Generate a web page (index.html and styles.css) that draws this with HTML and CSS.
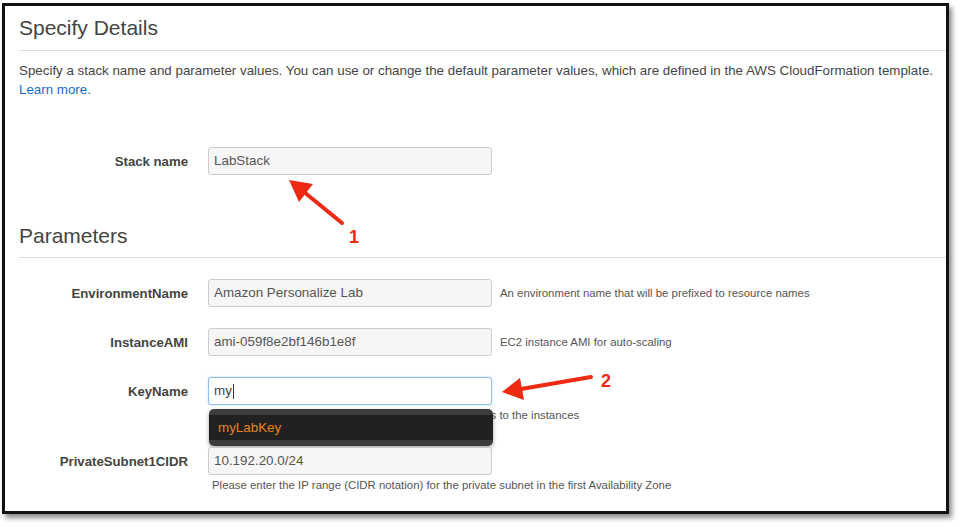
FILE: index.html
```html
<!DOCTYPE html>
<html>
<head>
<meta charset="utf-8">
<link rel="stylesheet" href="styles.css">
</head>
<body>
<div class="frame">
  <h2 class="title">Specify Details</h2>
  <hr class="rule">
  <p class="intro">Specify a stack name and parameter values. You can use or change the default parameter values, which are defined in the AWS CloudFormation template. <a class="link" href="#">Learn more.</a></p>

  <div class="row stack-row">
    <label class="label">Stack name</label>
    <div class="input">LabStack</div>
  </div>

  <h2 class="title params">Parameters</h2>
  <hr class="rule params-rule">

  <div class="row">
    <label class="label">EnvironmentName</label>
    <div class="input">Amazon Personalize Lab</div>
    <span class="help">An environment name that will be prefixed to resource names</span>
  </div>
  <div class="row">
    <label class="label">InstanceAMI</label>
    <div class="input">ami-059f8e2bf146b1e8f</div>
    <span class="help">EC2 instance AMI for auto-scaling</span>
  </div>
  <div class="row key-row">
    <label class="label">KeyName</label>
    <div class="input focus">my<span class="caret"></span></div>
    <span class="help below">Name of an existing EC2 KeyPair to enable SSH access to the instances</span>
    <div class="menu"><div class="menu-item">myLabKey</div></div>
  </div>
  <div class="row after-key">
    <label class="label">PrivateSubnet1CIDR</label>
    <div class="input">10.192.20.0/24</div>
    <span class="help below">Please enter the IP range (CIDR notation) for the private subnet in the first Availability Zone</span>
  </div>
</div>

<svg class="arrows" width="960" height="527" viewBox="0 0 960 527">
  <line x1="342" y1="223" x2="304" y2="192" stroke="#ee2a12" stroke-width="4" stroke-linecap="round"/>
  <polygon points="289,180 313,184 299,202" fill="#ee2a12"/>
  <line x1="591" y1="377" x2="521" y2="389" stroke="#ee2a12" stroke-width="4" stroke-linecap="round"/>
  <polygon points="502,392 520,378 524,400" fill="#ee2a12"/>
  <text x="354" y="243" class="num">1</text>
  <text x="606" y="387" class="num">2</text>
</svg>
</body>
</html>
```

FILE: styles.css
```css
html, body {
  margin: 0;
  padding: 0;
  background: #fff;
}
body {
  width: 960px;
  height: 527px;
  overflow: hidden;
  position: relative;
  font-family: "Liberation Sans", Arial, sans-serif;
  color: #444;
}
.frame {
  margin: 3px 0 0 2px;
  width: 941px;
  height: 505px;
  border: 3px solid #111;
  box-shadow: 3px 4px 5px rgba(0,0,0,0.45);
  background: #fff;
  overflow: hidden;
  position: relative;
}
.title {
  margin: 9px 0 0 14px;
  font-size: 21px;
  line-height: 26px;
  font-weight: normal;
  color: #444;
}
.rule {
  margin: 9px 0 0 14px;
  border: 0;
  border-top: 1px solid #ddd;
  height: 0;
}
.intro {
  margin: 10px 0 0 14px;
  width: 922px;
  font-size: 13.35px;
  line-height: 19px;
  color: #444;
}
.link {
  color: #1a6bc4;
  text-decoration: none;
}
.row {
  display: grid;
  grid-template-columns: 183px 284px auto;
  column-gap: 20px;
  align-items: center;
  margin-top: 21px;
  position: relative;
}
.stack-row {
  margin-top: 48px;
}
.after-key {
  margin-top: 25px;
}
.label {
  font-size: 13.2px;
  font-weight: bold;
  color: #444;
  text-align: right;
}
.input {
  box-sizing: border-box;
  height: 28px;
  border: 1px solid #ccc;
  border-radius: 3px;
  background: #f6f6f6;
  font-size: 13.4px;
  line-height: 26px;
  padding-left: 5px;
  color: #555;
  display: flex;
  align-items: center;
}
.input.focus {
  background: #fff;
  border-color: #8ebfee;
  box-shadow: 0 0 2px rgba(102,175,233,0.5);
  color: #444;
}
.caret {
  display: inline-block;
  width: 1px;
  height: 15px;
  background: #333;
  margin-left: 1px;
}
.help {
  font-size: 11.4px;
  color: #555;
  margin-left: -12px;
}
.help.below {
  grid-column: 2 / span 2;
  margin: 4px 0 0 4px;
  line-height: 13px;
}
.params {
  margin-top: 48px;
}
.params-rule {
  margin-top: 8px;
}
.menu {
  position: absolute;
  left: 204px;
  top: 32px;
  width: 284px;
  height: 37px;
  box-sizing: border-box;
  background: #3d3d3d;
  border-radius: 5px;
  padding-top: 6px;
  box-shadow: 0 2px 4px rgba(0,0,0,0.35);
}
.menu-item {
  background: #212121;
  height: 25px;
  line-height: 25px;
  padding-left: 9px;
  font-size: 13.4px;
  color: #e8841c;
}
.arrows {
  position: absolute;
  top: 0;
  left: 0;
  pointer-events: none;
}
.num {
  font-family: "Liberation Sans", Arial, sans-serif;
  font-weight: bold;
  font-size: 18px;
  fill: #ee2a12;
  text-anchor: middle;
}
```
